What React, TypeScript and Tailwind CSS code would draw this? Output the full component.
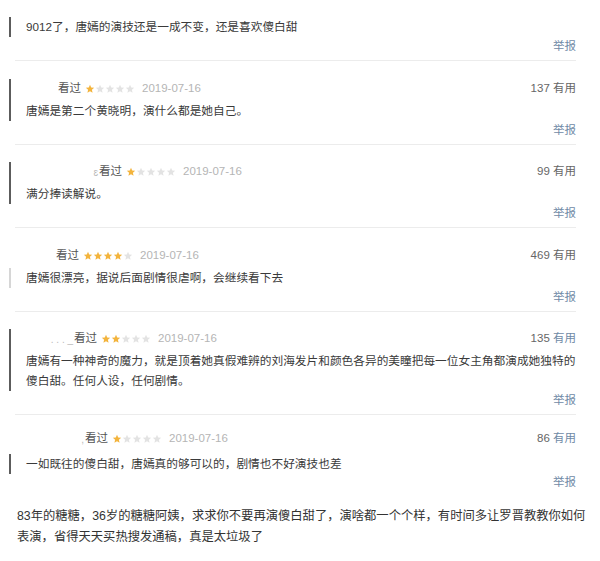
import React from "react";

type Review = {
  prefix?: string;
  stars?: number;
  useful?: number;
  usefulBlue?: boolean;
  lines: string[];
  bar: "dark" | "light" | "none";
  barHeader?: boolean;
  gapTop: string;
  divider?: boolean;
};

const reviews: Review[] = [
  {
    lines: ["9012了，唐嫣的演技还是一成不变，还是喜欢傻白甜"],
    bar: "dark",
    gapTop: "pt-[15px]",
    divider: true,
  },
  {
    prefix: "",
    stars: 1,
    useful: 137,
    lines: ["唐嫣是第二个黄晓明，演什么都是她自己。"],
    bar: "dark",
    barHeader: true,
    gapTop: "pt-[18px]",
    divider: true,
  },
  {
    prefix: "ɛ",
    stars: 1,
    useful: 99,
    lines: ["满分捧读解说。"],
    bar: "dark",
    barHeader: true,
    gapTop: "pt-[17px]",
    divider: true,
  },
  {
    prefix: "",
    stars: 4,
    useful: 469,
    lines: ["唐嫣很漂亮，据说后面剧情很虐啊，会继续看下去"],
    bar: "light",
    gapTop: "pt-[18px]",
    divider: true,
  },
  {
    prefix: ". . . _",
    stars: 2,
    useful: 135,
    usefulBlue: true,
    lines: [
      "唐嫣有一种神奇的魔力，就是顶着她真假难辨的刘海发片和颜色各异的美瞳把每一位女主角都演成她独特的",
      "傻白甜。任何人设，任何剧情。",
    ],
    bar: "dark",
    barHeader: true,
    gapTop: "pt-[17px]",
    divider: true,
  },
  {
    prefix: ",",
    stars: 1,
    useful: 86,
    usefulBlue: true,
    lines: ["一如既往的傻白甜，唐嫣真的够可以的，剧情也不好演技也差"],
    bar: "dark",
    gapTop: "pt-[14px]",
  },
];

const nameWidths = ["", "w-[31px]", "w-[72px]", "w-[29px]", "w-[47px]", "w-[58px]"];

function Stars({ count }: { count: number }) {
  return (
    <span className="flex items-center">
      {[0, 1, 2, 3, 4].map((i) => (
        <svg key={i} width="10" height="10" viewBox="0 0 24 24">
          <path
            d="M12 2l2.9 6.6 7.1.6-5.4 4.7 1.6 7-6.2-3.7-6.2 3.7 1.6-7L2 9.2l7.1-.6z"
            fill={i < count ? "#f3b43d" : "#e3e3e3"}
          />
        </svg>
      ))}
    </span>
  );
}

function ReviewBlock({ review, index }: { review: Review; index: number }) {
  const barClass =
    review.bar === "dark"
      ? "border-l-2 border-[#5c5c5c]"
      : review.bar === "light"
        ? "border-l-2 border-[#d6d6d6]"
        : "border-l-2 border-transparent";

  const header = review.stars !== undefined && (
    <div className="flex h-5 items-center pr-[24px]">
      <span className={`${nameWidths[index]} text-right text-[10px] text-[#bbbbbb]`}>
        {review.prefix}
      </span>
      <span className="ml-[1px] text-[11.5px] text-[#555555]">看过</span>
      <span className="ml-[4px]">
        <Stars count={review.stars} />
      </span>
      <span className="ml-[7px] text-[11.5px] text-[#b5b5b5]">2019-07-16</span>
      <span className="ml-auto text-[11.5px] text-[#666666]">
        {review.useful}{" "}
        <span className={review.usefulBlue ? "text-[#6f8aa6]" : "text-[#666666]"}>有用</span>
      </span>
    </div>
  );

  const content = (
    <div className={index === 5 ? "mt-[5px]" : "mt-[2px]"}>
      {review.lines.map((l) => (
        <div key={l} className="whitespace-nowrap text-[11.7px] leading-5 text-[#3a3a3a]">
          {l}
        </div>
      ))}
    </div>
  );

  return (
    <div className={review.gapTop}>
      {review.barHeader ? (
        <div className={`ml-[9px] pl-[15px] ${barClass}`}>
          {header}
          {content}
        </div>
      ) : (
        <>
          <div className="ml-[9px] pl-[15px] border-l-2 border-transparent">{header}</div>
          <div className={`ml-[9px] pl-[15px] ${barClass}`}>{content}</div>
        </>
      )}
      <div
        className={`flex h-5 items-center justify-end pr-[24px] text-[11.5px] text-[#6f8aa6] ${
          index === 5 ? "-mt-[1px]" : ""
        }`}
      >
        举报
      </div>
      {review.divider && <div className="ml-[15px] mr-[24px] mt-[3px] h-px bg-[#ececec]" />}
    </div>
  );
}

export default function App() {
  return (
    <div
      className="h-[561px] w-[600px] overflow-hidden bg-white"
      style={{ fontFamily: '"Liberation Sans", "Noto Sans CJK SC", sans-serif' }}
    >
      <div>
        {reviews.map((r, i) => (
          <ReviewBlock key={i} review={r} index={i} />
        ))}
      </div>
      <div className="mt-[13px] pl-[17px] pr-[10px] text-[12.3px] leading-[21px] text-[#333333]">
        <div className="whitespace-nowrap">
          83年的糖糖，36岁的糖糖阿姨，求求你不要再演傻白甜了，演啥都一个个样，有时间多让罗晋教教你如何
        </div>
        <div>表演，省得天天买热搜发通稿，真是太垃圾了</div>
      </div>
    </div>
  );
}
